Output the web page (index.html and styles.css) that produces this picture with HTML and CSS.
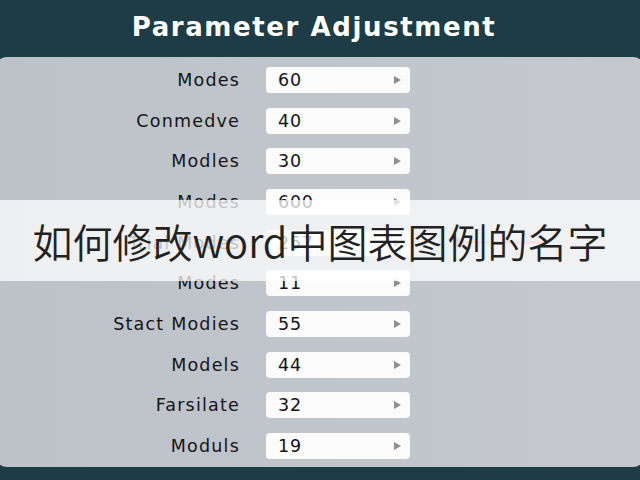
FILE: index.html
```html
<!DOCTYPE html>
<html lang="en">
<head>
<meta charset="utf-8">
<title>Parameter Adjustment</title>
<link rel="stylesheet" href="styles.css">
</head>
<body>
<div class="screen">
  <header class="header">
    <h1 class="title">Parameter Adjustment</h1>
  </header>
  <main class="panel">
    <div class="params">
      <span class="label">Modes</span>
      <div class="field"><span class="value">60</span><span class="arrow"></span></div>

      <span class="label">Conmedve</span>
      <div class="field"><span class="value">40</span><span class="arrow"></span></div>

      <span class="label">Modles</span>
      <div class="field"><span class="value">30</span><span class="arrow"></span></div>

      <span class="label">Modes</span>
      <div class="field"><span class="value">600</span><span class="arrow"></span></div>

      <span class="label">Trial Modes</span>
      <div class="field"><span class="value">257</span><span class="arrow"></span></div>
      <div class="slider"><span class="knob"></span></div>

      <span class="label">Modes</span>
      <div class="field"><span class="value">11</span><span class="arrow"></span></div>

      <span class="label">Stact Modies</span>
      <div class="field"><span class="value">55</span><span class="arrow"></span></div>

      <span class="label">Models</span>
      <div class="field"><span class="value">44</span><span class="arrow"></span></div>

      <span class="label">Farsilate</span>
      <div class="field"><span class="value">32</span><span class="arrow"></span></div>

      <span class="label">Moduls</span>
      <div class="field"><span class="value">19</span><span class="arrow"></span></div>
    </div>
  </main>
  <div class="banner">如何修改word中图表图例的名字</div>
</div>
</body>
</html>
```

FILE: styles.css
```css
* {
  box-sizing: border-box;
}

html,
body {
  margin: 0;
  padding: 0;
}

body {
  width: 640px;
  height: 480px;
  overflow: hidden;
  background: #1e3c45;
  font-family: "DejaVu Sans", "Liberation Sans", sans-serif;
}

.screen {
  position: relative;
  width: 640px;
  height: 480px;
  overflow: hidden;
}

/* top bar with the page title */
.header {
  height: 57px;
  padding-top: 14px;
  padding-right: 12px;
  text-align: center;
}

.title {
  margin: 0;
  font-size: 26px;
  line-height: 26px;
  font-weight: bold;
  letter-spacing: 1.6px;
  color: #ffffff;
}

/* light sheet holding the parameter rows */
.panel {
  margin: 0 -5px;
  height: 410px;
  padding: 10px 0 8px;
  background: linear-gradient(90deg, #bdc2c8 0%, #c1c6cc 60%, #c4c8cd 100%);
  border-radius: 12px;
}

.params {
  display: grid;
  grid-template-columns: 245px 144px 1fr;
  grid-auto-rows: 26px;
  column-gap: 26px;
  row-gap: 14.67px;
  align-items: center;
}

.label {
  grid-column: 1;
  text-align: right;
  font-size: 17.5px;
  letter-spacing: 1.2px;
  color: #141517;
}

.field {
  grid-column: 2;
  height: 26px;
  display: flex;
  align-items: center;
  justify-content: space-between;
  padding: 0 9px 0 12px;
  background: #fbfbfc;
  border-radius: 4px;
}

.value {
  font-size: 17.5px;
  letter-spacing: 0.8px;
  color: #141517;
}

/* small grey play-style triangle at the end of each field */
.arrow {
  width: 0;
  height: 0;
  border-top: 4.5px solid transparent;
  border-bottom: 4.5px solid transparent;
  border-left: 7px solid #8b8e92;
}

.slider {
  grid-column: 3;
  position: relative;
  width: 88px;
  height: 3px;
  margin-left: 20px;
  background: #e58b96;
  border-radius: 2px;
}

.knob {
  position: absolute;
  left: -3px;
  top: -3px;
  width: 9px;
  height: 9px;
  border-radius: 50%;
  background: #d36672;
}

/* translucent caption strip laid over the rows */
.banner {
  position: absolute;
  left: 0;
  top: 200px;
  width: 640px;
  height: 81px;
  display: flex;
  align-items: center;
  justify-content: center;
  background: rgba(255, 255, 255, 0.74);
  font-family: "Noto Sans CJK SC", "Noto Sans", sans-serif;
  font-weight: 350;
  font-size: 40px;
  color: #222222;
}
```
